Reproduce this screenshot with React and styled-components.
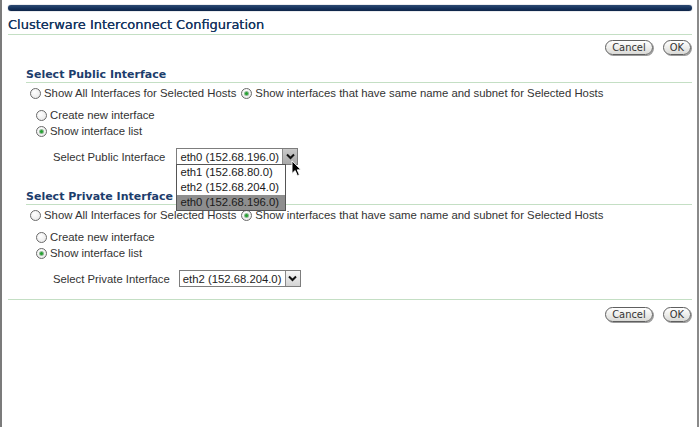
import styled, { createGlobalStyle, css } from "styled-components";

const GlobalStyle = createGlobalStyle`
  html, body {
    margin: 0;
    padding: 0;
    background: #ffffff;
  }
  body {
    font-family: "Liberation Sans", Arial, sans-serif;
  }
`;

const publicOptions = [
  "eth1 (152.68.80.0)",
  "eth2 (152.68.204.0)",
  "eth0 (152.68.196.0)",
];

export default function App() {
  return (
    <>
      <GlobalStyle />
      <Frame>
        <TopBar />
        <Title>Clusterware Interconnect Configuration</Title>
        <ButtonRow>
          <PillButton>Cancel</PillButton>
          <PillButton>OK</PillButton>
        </ButtonRow>

        <Section $first>
          <Heading>Select Public Interface</Heading>
          <ChoiceRow $indent={4} $top={2}>
            <Choice>
              <Radio />
              Show All Interfaces for Selected Hosts
            </Choice>
            <Choice>
              <Radio $checked />
              Show interfaces that have same name and subnet for Selected Hosts
            </Choice>
          </ChoiceRow>
          <ChoiceRow $indent={10} $top={6}>
            <Choice>
              <Radio />
              Create new interface
            </Choice>
          </ChoiceRow>
          <ChoiceRow $indent={10}>
            <Choice>
              <Radio $checked />
              Show interface list
            </Choice>
          </ChoiceRow>
          <SelectRow>
            <FieldLabel>Select Public Interface</FieldLabel>
            <SelectBox>
              <SelectValue>eth0 (152.68.196.0)</SelectValue>
              <ArrowButton $active>
                <Chevron />
              </ArrowButton>
              <OptionList>
                {publicOptions.map((opt, i) => (
                  <OptionItem key={opt} $selected={i === publicOptions.length - 1}>
                    {opt}
                  </OptionItem>
                ))}
              </OptionList>
              <Cursor viewBox="0 0 12 19" width="11" height="17">
                <path
                  d="M1 1 L1 15 L4.5 11.8 L7 17.5 L9.2 16.5 L6.8 11 L11 11 Z"
                  fill="#000"
                  stroke="#fff"
                  strokeWidth="1"
                  strokeLinejoin="round"
                />
              </Cursor>
            </SelectBox>
          </SelectRow>
        </Section>

        <Section>
          <Heading>Select Private Interface</Heading>
          <ChoiceRow $indent={4} $top={2}>
            <Choice>
              <Radio />
              Show All Interfaces for Selected Hosts
            </Choice>
            <Choice>
              <Radio $checked />
              Show interfaces that have same name and subnet for Selected Hosts
            </Choice>
          </ChoiceRow>
          <ChoiceRow $indent={10} $top={6}>
            <Choice>
              <Radio />
              Create new interface
            </Choice>
          </ChoiceRow>
          <ChoiceRow $indent={10}>
            <Choice>
              <Radio $checked />
              Show interface list
            </Choice>
          </ChoiceRow>
          <SelectRow $gap={9}>
            <FieldLabel>Select Private Interface</FieldLabel>
            <SelectBox>
              <SelectValue>eth2 (152.68.204.0)</SelectValue>
              <ArrowButton>
                <Chevron />
              </ArrowButton>
            </SelectBox>
          </SelectRow>
        </Section>

        <Divider />
        <ButtonRow $top={7}>
          <PillButton>Cancel</PillButton>
          <PillButton>OK</PillButton>
        </ButtonRow>
      </Frame>
    </>
  );
}

function Chevron() {
  return (
    <svg viewBox="0 0 9 7" width="9" height="7">
      <path d="M1 1.5 L4.5 5 L8 1.5" fill="none" stroke="#111" strokeWidth="2" />
    </svg>
  );
}

const Frame = styled.div`
  box-sizing: border-box;
  width: 699px;
  min-height: 100vh;
  padding: 5px 5px 0 6px;
  border-left: 2px solid #7b7b7b;
  border-right: 2px solid #8a8a8a;
  color: #333;
`;

const TopBar = styled.div`
  height: 6px;
  border-radius: 3px;
  background: linear-gradient(#2c4a72, #14305a 60%, #0f2547);
  box-shadow: 0 0 1px #33445e;
`;

const Title = styled.h1`
  margin: 3px 0 0;
  height: 20px;
  line-height: 21px;
  font-family: "DejaVu Sans", Verdana, sans-serif;
  font-size: 13px;
  font-weight: normal;
  color: #17355f;
  text-shadow: 0 0 0.4px #17355f;
  border-bottom: 1px solid #c4dfc4;
`;

const ButtonRow = styled.div`
  display: flex;
  justify-content: flex-end;
  gap: 10px;
  margin-top: ${(p) => p.$top ?? 5}px;
  padding-right: 1px;
`;

const PillButton = styled.button`
  box-sizing: border-box;
  height: 15px;
  padding: 0 6px;
  border: 1px solid #5f5f5f;
  border-radius: 8px;
  background: linear-gradient(#ffffff, #ececea 55%, #d9d9d6);
  box-shadow: 1px 1px 0 #9c9c9c;
  font-family: "DejaVu Sans Condensed", "DejaVu Sans", sans-serif;
  font-stretch: condensed;
  font-size: 11px;
  line-height: 12px;
  color: #333;
`;

const Section = styled.section`
  position: relative;
  padding-left: 18px;
  margin-top: ${(p) => (p.$first ? 12 : 24)}px;
`;

const Heading = styled.h2`
  margin: 0;
  height: 15px;
  line-height: 15px;
  font-family: "DejaVu Sans", Verdana, sans-serif;
  font-size: 11px;
  font-weight: bold;
  color: #1d3d6c;
  border-bottom: 1px solid #c4dfc4;
`;

const ChoiceRow = styled.div`
  display: flex;
  align-items: center;
  gap: 5px;
  height: 16px;
  margin-top: ${(p) => p.$top ?? 0}px;
  padding-left: ${(p) => p.$indent}px;
`;

const Choice = styled.label`
  display: flex;
  align-items: center;
  gap: 3px;
  font-size: 11.35px;
  color: #333;
  white-space: nowrap;
`;

const Radio = styled.span`
  position: relative;
  flex: none;
  box-sizing: border-box;
  width: 11px;
  height: 11px;
  border-radius: 50%;
  border: 1px solid #6a6a6a;
  background: radial-gradient(circle at 40% 35%, #ffffff, #e4e4e4);

  ${(p) =>
    p.$checked &&
    css`
      &::after {
        content: "";
        position: absolute;
        left: 3px;
        top: 3px;
        width: 3px;
        height: 3px;
        border-radius: 50%;
        background: #21a12e;
        box-shadow: 0 0 0 1px rgba(20, 110, 30, 0.45);
      }
    `}
`;

const SelectRow = styled.div`
  display: flex;
  align-items: center;
  gap: ${(p) => p.$gap ?? 11}px;
  height: 17px;
  margin-top: 9px;
  padding-left: 27px;
`;

const FieldLabel = styled.span`
  font-size: 11.3px;
  color: #333;
`;

const SelectBox = styled.div`
  position: relative;
  box-sizing: border-box;
  display: flex;
  align-items: center;
  width: 122px;
  height: 17px;
  border: 1px solid #7d7d7d;
  background: #fff;
`;

const SelectValue = styled.span`
  flex: 1;
  padding-left: 3px;
  font-size: 11.3px;
  color: #222;
  white-space: nowrap;
`;

const ArrowButton = styled.span`
  box-sizing: border-box;
  display: flex;
  align-items: center;
  justify-content: center;
  width: 15px;
  height: 15px;
  border-left: 1px solid #8a8a8a;
  background: ${(p) =>
    p.$active
      ? "linear-gradient(#c9c9c9, #a9a9a9)"
      : "linear-gradient(#f6f6f6, #d4d4d4)"};
`;

const OptionList = styled.ul`
  position: absolute;
  top: 15px;
  left: -1px;
  z-index: 2;
  box-sizing: border-box;
  width: 110px;
  margin: 0;
  padding: 0;
  list-style: none;
  border: 1px solid #555;
  background: #fff;
`;

const OptionItem = styled.li`
  height: 15px;
  line-height: 15px;
  padding-left: 3px;
  font-size: 11.3px;
  color: #1a1a1a;
  white-space: nowrap;
  background: ${(p) => (p.$selected ? "#8e8e8e" : "transparent")};
`;

const Cursor = styled.svg`
  position: absolute;
  left: 114px;
  top: 11px;
  z-index: 3;
`;

const Divider = styled.div`
  margin-top: 12px;
  border-top: 1px solid #c4dfc4;
`;
